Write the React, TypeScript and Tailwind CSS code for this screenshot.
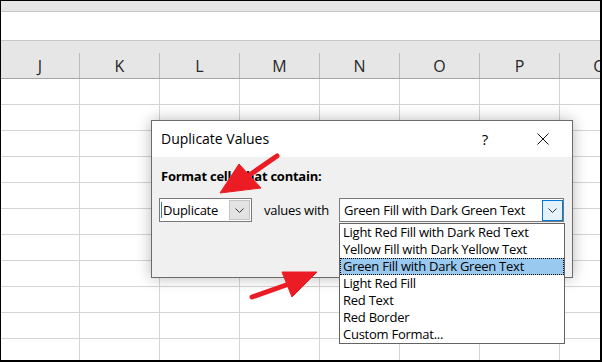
const columns = ["J", "K", "L", "M", "N", "O", "P", "Q"];
const rows = Array.from({ length: 11 }, (_, i) => i);
const formats = [
  "Light Red Fill with Dark Red Text",
  "Yellow Fill with Dark Yellow Text",
  "Green Fill with Dark Green Text",
  "Light Red Fill",
  "Red Text",
  "Red Border",
  "Custom Format...",
];

function Chevron() {
  return (
    <svg width="9" height="5" viewBox="0 0 9 5" fill="none" stroke="#333" strokeWidth="1">
      <polyline points="0.5,0.5 4.5,4.5 8.5,0.5" />
    </svg>
  );
}

export default function App() {
  return (
    <div className="relative h-[362px] w-[602px] overflow-hidden border-t border-l border-r-2 border-b-2 border-black bg-white font-['Open_Sans',sans-serif] text-black">
      {/* ribbon edge + formula bar */}
      <div className="h-[11px] border-b border-[#c6c6c6] bg-[#e6e6e6]" />
      <div className="h-[29px] border-b border-[#c6c6c6] bg-white" />

      {/* column headers */}
      <div className="flex h-[38px] border-b border-[#a5a5a5] bg-[#e6e6e6]">
        {columns.map((c, i) => (
          <div key={c} className={`flex shrink-0 ${i === 0 ? "w-[79px]" : "w-[80px]"}`}>
            <span className="flex-1 pt-[14px] text-center text-[16px] leading-[22px] text-[#262626]">{c}</span>
            <span className="h-[25px] w-px self-end bg-[#bcbcbc]" />
          </div>
        ))}
      </div>

      {/* cells */}
      {rows.map((r) => (
        <div key={r} className="flex h-[26px] border-b border-[#d4d4d4]">
          {columns.map((c, i) => (
            <div key={c} className={`shrink-0 border-r border-[#d4d4d4] ${i === 0 ? "w-[79px]" : "w-[80px]"}`} />
          ))}
        </div>
      ))}

      {/* dialog */}
      <div className="absolute left-[150px] top-[119px] h-[158px] w-[422px] border border-[#6b6b6b] bg-[#f0f0f0] shadow-[0_0_14px_rgba(0,0,0,0.28)]">
        <div className="flex h-[36px] items-center bg-white pr-[19px]">
          <span className="pl-[9px] text-[14px] leading-[20px]">Duplicate Values</span>
          <span className="ml-auto w-[20px] text-center text-[15px] leading-[20px]">?</span>
          <span className="ml-[38px] flex w-[20px] justify-center">
            <svg width="12" height="12" viewBox="0 0 12 12" stroke="#111" strokeWidth="1">
              <path d="M0.5 0.5 L11.5 11.5 M11.5 0.5 L0.5 11.5" />
            </svg>
          </span>
        </div>
        <div className="pt-[10px] text-[13px] tracking-[-0.25px]">
          <p className="ml-[9px] font-bold leading-[18px]">Format cells that contain:</p>
          <div className="ml-[7px] mr-[8px] mt-[13px] flex items-center">
            <div className="flex h-[24px] w-[93px] items-center border border-[#7a7a7a] bg-white">
              <span className="ml-px h-[16px] w-px bg-[#3b78d8]" />
              <span className="ml-px flex-1 leading-[18px]">Duplicate</span>
              <span className="mr-px flex h-[20px] w-[21px] items-center justify-center border border-[#c4c4c4] bg-[#e3e3e3]">
                <Chevron />
              </span>
            </div>
            <span className="ml-[12px] leading-[18px]">values with</span>
            <div className="ml-auto flex h-[24px] w-[225px] items-start border border-[#7a7a7a] bg-white">
              <span className="flex-1 pl-[4px] pt-[2px] leading-[18px]">Green Fill with Dark Green Text</span>
              <span className="mt-px flex h-[21px] w-[21px] items-center justify-center border border-[#0078d7] bg-[#e5f1fb]">
                <Chevron />
              </span>
            </div>
          </div>
        </div>
      </div>

      {/* open dropdown list */}
      <ul className="absolute left-[338px] top-[222px] w-[226px] border border-[#646464] bg-white text-[13px] tracking-[-0.25px]">
        {formats.map((f) =>
          f === "Green Fill with Dark Green Text" ? (
            <li key={f} className="h-[17px] border border-dotted border-black bg-[#99c9ef] pl-[2px] leading-[15px]">
              {f}
            </li>
          ) : (
            <li key={f} className="h-[17px] pl-[3px] leading-[17px]">
              {f}
            </li>
          )
        )}
      </ul>

      {/* red arrows */}
      <svg className="pointer-events-none absolute -left-px -top-px" width="602" height="362" viewBox="0 0 602 362">
        <g fill="#ec1c24" stroke="#ec1c24">
          <line x1="277" y1="156" x2="248" y2="176" strokeWidth="5" strokeLinecap="round" />
          <polygon points="220,193 239,164 261,188" strokeWidth="1" strokeLinejoin="round" />
          <line x1="252" y1="297" x2="289" y2="284" strokeWidth="5" strokeLinecap="round" />
          <polygon points="317,272 282,272 292,297" strokeWidth="1" strokeLinejoin="round" />
        </g>
      </svg>
    </div>
  );
}
